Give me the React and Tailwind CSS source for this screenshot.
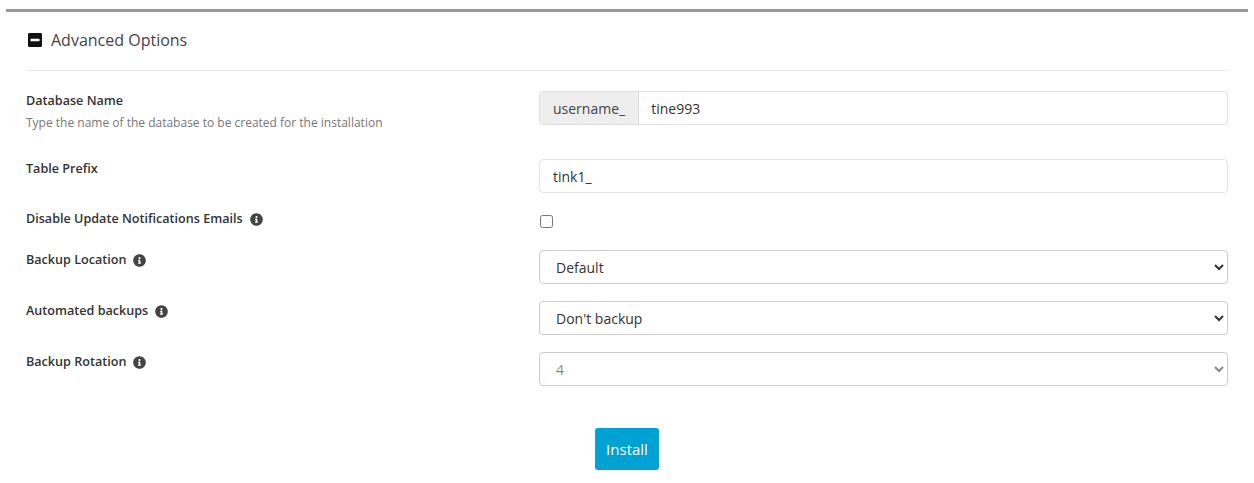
import React from "react";
import { FaInfoCircle, FaMinusSquare } from "react-icons/fa";

const font = { fontFamily: '"Open Sans", "Noto Sans", sans-serif' };

const Label = ({ text, info, hint }) => (
    <div className="pt-[1px]">
        <div className="flex items-center gap-[7px] text-[12.6px] font-semibold leading-[18px] text-[#333]">
            {text}
            {info && <FaInfoCircle className="text-[#444]" size={13} />}
        </div>
        {hint && <div className="mt-[4px] text-[12px] leading-[18px] text-[#777]">{hint}</div>}
    </div>
);

const Row = ({ h, children }) => (
    <div className="grid grid-cols-[513px_1fr] items-start" style={{ height: h }}>
        {children}
    </div>
);

const selectCls =
    "h-[34px] w-full rounded-[4px] border border-[#ccc] bg-white px-[12px] text-[14px] text-[#333] outline-none";

export default function App() {
    return (
        <div className="min-h-screen bg-white" style={font}>
            <div className="mx-[6px] pt-[9px]">
                <div className="h-[3px] bg-[#999]" />
            </div>

            <div className="mx-[26px]">
                {/* Header */}
                <div className="flex h-[59px] items-center gap-[8px] border-b border-[#e8e8e8] pb-[3px] pl-[1px]">
                    <FaMinusSquare className="text-[#111]" size={16} />
                    <span className="text-[16px] text-[#444]">Advanced Options</span>
                </div>

                <div className="pt-[20px]">
                    <Row h={68}>
                        <Label text="Database Name" hint="Type the name of the database to be created for the installation" />
                        <div className="flex h-[34px] text-[14px]">
                            <span className="flex items-center rounded-l-[4px] border border-[#ddd] bg-[#eee] px-[13px] text-[#444]">
                                username_
                            </span>
                            <input
                                className="flex-1 rounded-r-[4px] border border-l-0 border-[#e3e3e3] px-[12px] text-[#333] outline-none"
                                defaultValue="tine993"
                            />
                        </div>
                    </Row>

                    <Row h={50}>
                        <Label text="Table Prefix" />
                        <input
                            className="h-[34px] w-full rounded-[4px] border border-[#e3e3e3] px-[13px] text-[14px] text-[#333] outline-none"
                            defaultValue="tink1_"
                        />
                    </Row>

                    <Row h={41}>
                        <Label text="Disable Update Notifications Emails" info />
                        <div className="pt-[1px]">
                            <input type="checkbox" className="m-0 ml-[1px] h-[13px] w-[13px]" />
                        </div>
                    </Row>

                    <Row h={51}>
                        <Label text="Backup Location" info />
                        <select className={selectCls} defaultValue="default">
                            <option value="default">Default</option>
                        </select>
                    </Row>

                    <Row h={51}>
                        <Label text="Automated backups" info />
                        <select className={selectCls} defaultValue="none">
                            <option value="none">Don't backup</option>
                            <option value="daily">Once a day</option>
                            <option value="weekly">Once a week</option>
                            <option value="monthly">Once a month</option>
                        </select>
                    </Row>

                    <Row h={76}>
                        <Label text="Backup Rotation" info />
                        <select
                            className={selectCls + " bg-[#eee] text-[#888]"}
                            defaultValue="4"
                            disabled
                        >
                            <option value="4">4</option>
                        </select>
                    </Row>
                </div>
            </div>

            <div className="flex justify-center">
                <button className="h-[42px] rounded-[3px] bg-[#00a1d3] px-[11px] text-[15px] text-white">
                    Install
                </button>
            </div>
        </div>
    );
}
